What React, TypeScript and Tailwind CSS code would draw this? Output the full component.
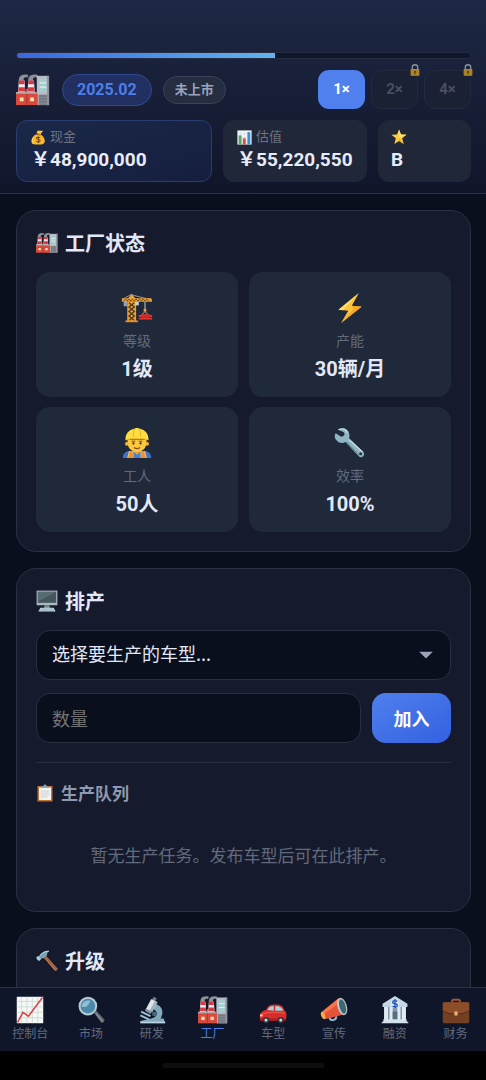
import type { ReactNode } from "react";
import clsx from "clsx";

type IconProps = { className?: string };

function Icon({ className, children }: { className?: string; children: ReactNode }) {
  return (
    <svg viewBox="0 0 36 36" className={clsx("shrink-0", className)} aria-hidden="true">
      {children}
    </svg>
  );
}

function FactoryIcon({ className }: IconProps) {
  return (
    <Icon className={className}>
      <path d="M3 6C4 2 8 1 13 2l-1 3C9 4 8 5 8 8H3z" fill="#8d9097" />
      <path d="M13 6c1-4 5-5 10-4l-1 3c-3-1-4 0-4 3h-5z" fill="#8d9097" />
      <path d="M22 3h13v31H22z" fill="#b9bcc3" />
      <path d="M33 3h2v31h-2z" fill="#8f929a" />
      <path d="M25 6h7v14h-7z" fill="#9fd0d2" />
      <path d="M25 10.500h7M25 15h7" stroke="#e3eeee" strokeWidth="1.300" />
      <path d="M3 8h6l1 14H2z" fill="#ececf0" />
      <path d="M13 8h6l1 14h-8z" fill="#ececf0" />
      <path d="M3 8h6v4H3zM2.500 15h7v4.500h-7zM13 8h6v4h-6zM12.500 15h7v4.500h-7z" fill="#d93a42" />
      <path d="M0 20l11 0v-3h1l0 3h10v3H0z" fill="#b5a7a8" />
      <path d="M0 22h23v12H0z" fill="#d84a40" />
      <path d="M11 22h1v12h-1z" fill="#a7352f" />
      <path d="M4 26h4v4H4zM15 26h4v4h-4z" fill="#fbe2a8" />
      <path d="M24 23h9v11h-9z" fill="#777a82" />
      <path d="M24 26h9M24 29h9M24 32h9" stroke="#8d9098" strokeWidth=".7" />
    </Icon>
  );
}

function MoneyBagIcon({ className }: IconProps) {
  return (
    <Icon className={className}>
      <path d="M15 9C5 13 0 22 1 29c1 6 7 6 15 6s16-1 17-7c1-7-5-15-12-19z" fill="#f6b92c" />
      <path d="M14 8c0-3 0-5 3-7 2 2 4 0 6 1s4-1 6 0c-1 3-4 4-6 8z" fill="#fbc93a" />
      <path d="M12 9l12 1-1 3-11-1z" fill="#a9691f" />
      <path d="M6 18c-3 4-3 10-1 12" stroke="#ffe07b" strokeWidth="2" fill="none" />
      <path d="M22 19c-3-3-9-2-9 1 0 4 9 2 9 6 0 4-7 4-10 1M17.500 15v16" stroke="#7a4a17" strokeWidth="2.500" fill="none" />
    </Icon>
  );
}

function BarChartIcon({ className }: IconProps) {
  return (
    <Icon className={className}>
      <path d="M1 1h34v34H1z" fill="#f3f6f8" />
      <path d="M1 9h34M1 18h34M1 27h34M9 1v34M18 1v34M27 1v34" stroke="#c5d3da" />
      <path d="M4 13h7v22H4z" fill="#5aa469" />
      <path d="M14 20h7v15h-7z" fill="#dd4a46" />
      <path d="M25 5h7v30h-7z" fill="#3b8fd6" />
    </Icon>
  );
}

function StarIcon({ className }: IconProps) {
  return (
    <Icon className={className}>
      <path d="M18 1l4.500 11.500L35 13l-9.800 8L28.500 34 18 27 7.500 34l3.300-13L1 13l12.500-.5z" fill="#fccb3f" />
      <path d="M18 1l4.500 11.500L35 13l-17 7z" fill="#ffe26e" />
      <path d="M28.500 34L18 27V20z" fill="#efa92b" />
    </Icon>
  );
}

function LockIcon({ className }: IconProps) {
  return (
    <Icon className={className}>
      <path d="M10 17V9c0-9 16-9 16 0v8" stroke="#8f949c" strokeWidth="4" fill="none" />
      <rect x="5" y="15" width="26" height="20" rx="2" fill="#b98d2b" />
      <path d="M5 20h26M5 25h26M5 30h26" stroke="#8d6a22" strokeWidth="1.500" />
      <path d="M18 20a3 3 0 011.500 5.500V31h-3v-5.500A3 3 0 0118 20z" fill="#483613" />
    </Icon>
  );
}

function CraneIcon({ className }: IconProps) {
  return (
    <Icon className={className}>
      <path d="M11 3L35 9M11 3L2 8" stroke="#9da2a8" strokeWidth="1" />
      <path d="M3 10h4v6H3z" fill="#9aa0a8" />
      <path d="M1 7h7l4-5 4 5h18l1 4H1z" fill="#eda036" />
      <path d="M3 10l2-2 2 2 2-2 2 2 2-2 2 2 2-2 2 2 2-2 2 2 2-2 2 2 2-2 2 2" stroke="#5b411f" strokeWidth="1.100" fill="none" />
      <path d="M7 11h10v22H7z" fill="#eda036" />
      <path d="M9 12l6 5-6 5 6 5-6 5M15 12l-6 5 6 5-6 5 6 5" stroke="#49371f" strokeWidth="1.500" fill="none" />
      <path d="M5 32h14v2H5z" fill="#e69228" />
      <path d="M16 11h4v4h-4z" fill="#c7d2d6" />
      <path d="M27 11v9" stroke="#a6abb1" strokeWidth="1.400" />
      <path d="M25.500 19h3v3h-3z" fill="#eda036" />
      <path d="M27 22l-4 4h8z" fill="none" stroke="#b8b8b8" />
      <path d="M20 26h15v2H20zM20 29h15v2H20z" fill="#e4372f" />
      <path d="M23 25h9v4h-9z" fill="#cf2b27" />
    </Icon>
  );
}

function BoltIcon({ className }: IconProps) {
  return (
    <Icon className={className}>
      <path d="M28 1L5 20l11 1L8 35l23-18.500-11-1z" fill="#fbc23c" />
      <path d="M28 1L5 20l5 .5z" fill="#ffdc6a" />
      <path d="M20 15.500l11 1L8 35l14-16z" fill="#f5a72c" />
    </Icon>
  );
}

function WorkerIcon({ className }: IconProps) {
  return (
    <Icon className={className}>
      <path d="M2 35c0-6 4-8 9-8h14c5 0 9 2 9 8z" fill="#3f71c9" />
      <path d="M9 27h18l2 8H7z" fill="#fbdc4a" />
      <path d="M8 35l2-8h3l1 8zM28 35l-2-8h-3l-1 8z" fill="#ef8f38" />
      <path d="M14 27l4 4 4-4v8h-8z" fill="#4c7fd6" />
      <path d="M14 23h8v4l-4 4-4-4z" fill="#eaa42c" />
      <path d="M6 14h24v5H6z" fill="#624018" />
      <circle cx="6.500" cy="19" r="2" fill="#f5b832" />
      <circle cx="29.500" cy="19" r="2" fill="#f5b832" />
      <path d="M7.500 14h21v4c0 6-5 10-10.500 10S7.500 24 7.500 18z" fill="#fbc840" />
      <path d="M12 16h4M20 16h4" stroke="#6b431a" />
      <circle cx="14" cy="18.500" r="1.300" fill="#49311c" />
      <circle cx="22" cy="18.500" r="1.300" fill="#49311c" />
      <path d="M14.500 23c2 1.500 5 1.500 7 0" stroke="#8b4c20" strokeWidth="1.300" fill="none" />
      <path d="M5 15c0-8 4-12 10-13 1-1 5-1 6 0 6 1 10 5 10 13-7-3-19-3-26 0z" fill="#ffdf3f" />
      <path d="M15 2c-1 3-1 6-1 9M21 2c1 3 1 6 1 9" stroke="#e4b52d" strokeWidth="1.200" fill="none" />
      <path d="M4 15c7-4 21-4 28 0-7-2-21-2-28 0z" fill="#f2bd2e" />
    </Icon>
  );
}

function WrenchIcon({ className }: IconProps) {
  return (
    <Icon className={className}>
      <path d="M5 3c5-3 11-1 12 4 1 3 0 4 0 6l16 15c3 3-2 8-5 5L13 17c-4 2-8 1-11-3-2-3-1-6 0-7l6 4c3 0 5-3 3-5z" fill="#8fb4c2" />
      <path d="M17 14l15 14M5 3c5-2 9-1 10 4" stroke="#c5dde5" strokeWidth="1.500" fill="none" />
      <path d="M14 17l14 15" stroke="#628b9b" strokeWidth="1.500" />
      <circle cx="30" cy="30" r="1.700" fill="#24343f" />
    </Icon>
  );
}

function MonitorIcon({ className }: IconProps) {
  return (
    <Icon className={className}>
      <path d="M1 1h34v24H1z" fill="#a7bac1" />
      <path d="M3 3h30v18H3z" fill="#45565e" />
      <path d="M3 3h30L3 19z" fill="#5a6c73" />
      <path d="M14 25h8l1 5H13z" fill="#76909b" />
      <path d="M7 29h22l3 6H4z" fill="#c0d8df" />
      <path d="M8 31h20M6 33h24" stroke="#83a6b1" />
    </Icon>
  );
}

function ClipboardIcon({ className }: IconProps) {
  return (
    <Icon className={className}>
      <path d="M3 4h30v31H3z" fill="#bd7439" />
      <path d="M6 7h24v25H6z" fill="#f4f4f3" />
      <path d="M9 14h18M9 18h18M9 22h18M9 26h14" stroke="#bdc5ca" strokeWidth="1.500" />
      <path d="M10 8c0-3 3-3 5-4 0-4 6-4 6 0 2 1 5 1 5 4z" fill="#8aa8b4" />
    </Icon>
  );
}

function HammerIcon({ className }: IconProps) {
  return (
    <Icon className={className}>
      <path d="M14 13l3-3 18 20c1 3-2 5-4 4z" fill="#a3633b" />
      <path d="M14 13l17 20" stroke="#cf8a5b" strokeWidth="1.500" />
      <path d="M1 12l5-3c5-6 10-9 16-7-3 1-4 3-4 7l-5 5-3-1-4 4z" fill="#78a3b5" />
      <path d="M6 9C11 4 16 2 21 2" stroke="#c1dce6" strokeWidth="1.500" fill="none" />
      <ellipse cx="4" cy="14" rx="2.700" ry="4" transform="rotate(-38 4 14)" fill="#abc9d7" />
    </Icon>
  );
}

function ChartUpIcon({ className }: IconProps) {
  return (
    <Icon className={className}>
      <path d="M1 1h34v34H1z" fill="#f7f8f6" />
      <path d="M1 7h34M1 14h34M1 21h34M1 28h34M7 1v34M14 1v34M21 1v34M28 1v34" stroke="#c3d7cd" />
      <path d="M2 34l7-13 7 5L34 2" stroke="#d6404a" strokeWidth="2" fill="none" />
    </Icon>
  );
}

function MagnifierIcon({ className }: IconProps) {
  return (
    <Icon className={className}>
      <path d="M22 22l3-3 10 11c1 3-2 5-4 4z" fill="#60646b" />
      <path d="M24 22l9 11" stroke="#92969c" strokeWidth="1.500" />
      <circle cx="14" cy="13" r="12" fill="#b7cbd4" />
      <circle cx="14" cy="13" r="9.500" fill="#4f89a9" />
      <path d="M6 14c0-6 5-9 11-8-2 6-5 9-11 8z" fill="#8ebfd6" />
    </Icon>
  );
}

function MicroscopeIcon({ className }: IconProps) {
  return (
    <Icon className={className}>
      <path d="M21 10c10 2 13 10 8 19h4l2 6H3v-3l14-3c9-2 9-9 3-12z" fill="#82aabd" />
      <path d="M20 1l4 2-2 4-4-2z" fill="#6f7d86" />
      <path d="M17 4l8 4-7 13-8-4z" fill="#dce4e8" />
      <path d="M22 6l3 2-7 13-3-2z" fill="#a2b2ba" />
      <path d="M10 16l8 4-2 3-7-4z" fill="#8097a3" />
      <path d="M4 20l12 6M3 25l11 5" stroke="#9cc0d0" strokeWidth="2.500" />
      <circle cx="21" cy="23" r="3" fill="#41687b" />
      <path d="M3 33h32v2H3z" fill="#b9d3df" />
    </Icon>
  );
}

function CarIcon({ className }: IconProps) {
  return (
    <Icon className={className}>
      <path d="M1 26c0-4 3-7 8-8 3-6 5-7 12-7 6 0 10 1 12 8 3 1 3 9 1 12H3c-2 0-2-3-2-5z" fill="#d92d2c" />
      <path d="M11 18c2-4 4-5 8-5v6zM21 13c5 0 8 1 10 6H21z" fill="#a7d1dc" />
      <path d="M2 25c5-4 16-5 31-3" stroke="#f05949" strokeWidth="1.500" fill="none" />
      <path d="M1 29h33v3H2z" fill="#a31f24" />
      <circle cx="9" cy="31" r="4" fill="#30343b" />
      <circle cx="28" cy="31" r="4" fill="#30343b" />
      <circle cx="9" cy="31" r="2" fill="#d0d2d5" />
      <circle cx="28" cy="31" r="2" fill="#d0d2d5" />
      <circle cx="3" cy="25" r="1.500" fill="#ffe1a1" />
    </Icon>
  );
}

function MegaphoneIcon({ className }: IconProps) {
  return (
    <Icon className={className}>
      <path d="M12 27c1 6 9 5 9-1" stroke="#9db6c1" strokeWidth="2.500" fill="none" />
      <path d="M3 20L24 3l9 20L6 30z" fill="#e6533a" />
      <path d="M3 20L24 3l2 5L4 24z" fill="#f5764c" />
      <ellipse cx="4" cy="25" rx="2.500" ry="5" transform="rotate(-20 4 25)" fill="#f4ae42" />
      <ellipse cx="28.500" cy="13.500" rx="6" ry="11.500" transform="rotate(-16 28.500 13.500)" fill="#b4cbd4" />
      <ellipse cx="29" cy="13.500" rx="4" ry="9.500" transform="rotate(-16 29 13.500)" fill="#3d6870" />
    </Icon>
  );
}

function BankIcon({ className }: IconProps) {
  return (
    <Icon className={className}>
      <path d="M18 0l16 10v4H2v-4z" fill="#c5d6e4" />
      <path d="M4 14h28v17H4z" fill="#8498a8" />
      <path d="M4 14h5v17H4zM11 14h4v17h-4zM21 14h4v17h-4zM27 14h5v17h-5z" fill="#e0ebf3" />
      <path d="M15 20h6v12h-6z" fill="#57707e" />
      <path d="M3 30h30v3H3zM1 33h34v2H1z" fill="#d6e2eb" />
      <circle cx="18" cy="10" r="6" fill="#d8e6f2" />
      <path d="M21 7c-3-2-6-1-6 1 0 3 6 1 6 4 0 3-4 3-6 1M18 4v12" stroke="#2458bf" strokeWidth="1.800" fill="none" />
    </Icon>
  );
}

function BriefcaseIcon({ className }: IconProps) {
  return (
    <Icon className={className}>
      <path d="M13 9V6c0-2 10-2 10 0v3" stroke="#9a572f" strokeWidth="2.500" fill="none" />
      <rect x="1" y="8" width="34" height="27" rx="2" fill="#754022" />
      <path d="M1 10c0-1 1-2 2-2h30c1 0 2 1 2 2v9c-10 6-24 6-34 0z" fill="#8c4d2b" />
      <path d="M1 19c10 6 24 6 34 0" stroke="#4f2b18" strokeWidth="1.200" fill="none" />
      <path d="M16 20h4v5h-4z" fill="#ebbd74" />
    </Icon>
  );
}

const speeds = [
  { label: "1×", locked: false },
  { label: "2×", locked: true },
  { label: "4×", locked: true },
];

const stats = [
  { icon: CraneIcon, label: "等级", value: "1级" },
  { icon: BoltIcon, label: "产能", value: "30辆/月" },
  { icon: WorkerIcon, label: "工人", value: "50人" },
  { icon: WrenchIcon, label: "效率", value: "100%" },
];

const tabs = [
  { icon: ChartUpIcon, label: "控制台" },
  { icon: MagnifierIcon, label: "市场" },
  { icon: MicroscopeIcon, label: "研发" },
  { icon: FactoryIcon, label: "工厂", active: true },
  { icon: CarIcon, label: "车型" },
  { icon: MegaphoneIcon, label: "宣传" },
  { icon: BankIcon, label: "融资" },
  { icon: BriefcaseIcon, label: "财务" },
];

function Header() {
  return (
    <header className="flex shrink-0 flex-col gap-[11px] border-b border-[#2b3147] bg-linear-to-b from-[#1e2844] to-[#10152a] pt-[52px] pr-[15px] pb-[11px] pl-4 font-[Roboto,'Noto_Sans_CJK_SC',sans-serif]">
      <div className="h-[7px] overflow-hidden rounded-full border border-[#262d41] bg-[#0f1629]">
        <div className="h-full w-[57%] bg-linear-to-r from-[#3b66e0] to-[#63b3ed]" />
      </div>

      <div className="flex items-center justify-between">
        <div className="flex items-center">
          <FactoryIcon className="size-[34px]" />
          <span className="ml-3 flex h-8 items-center rounded-full border border-[#2f4a8c] bg-[#213060] px-3.5 text-base font-bold text-[#4d7fe9]">
            2025.02
          </span>
          <span className="ml-[11px] flex h-7 items-center rounded-full border border-[#3a4257] bg-[#252d40] px-[11px] text-[13px] font-bold text-[#9ba3b8]">
            未上市
          </span>
        </div>
        <div className="flex gap-1.5">
          {speeds.map((s) => (
            <button
              key={s.label}
              disabled={s.locked}
              className={clsx(
                "relative h-[39px] w-[47px] rounded-[11px] text-[15px] font-bold",
                s.locked
                  ? "border border-[#242a3c] bg-[#1a2134] text-[#484f60]"
                  : "bg-[#4f80ee] text-white"
              )}
            >
              {s.label}
              {s.locked && <LockIcon className="absolute -top-[7px] -right-1 size-3" />}
            </button>
          ))}
        </div>
      </div>

      <div className="grid grid-cols-[196fr_144fr_93fr] gap-[11px]">
        <div className="rounded-[11px] border border-[#2a3d70] bg-linear-to-br from-[#1b2848] to-[#151e3e] px-3.5 py-[7px]">
          <p className="flex items-center gap-1 text-[13px] leading-[18px] text-[#6b7280]">
            <MoneyBagIcon className="size-[15px]" />
            现金
          </p>
          <p className="text-[19px] leading-7 font-bold text-[#e8ecf8]">{"\uFFE5"}48,900,000</p>
        </div>
        <div className="rounded-[11px] border border-[#1f2738] bg-[#1f2738] px-[13px] py-[7px]">
          <p className="flex items-center gap-1 text-[13px] leading-[18px] text-[#6b7280]">
            <BarChartIcon className="size-[15px]" />
            估值
          </p>
          <p className="text-[19px] leading-7 font-bold whitespace-nowrap text-[#e8ecf8]">{"\uFFE5"}55,220,550</p>
        </div>
        <div className="rounded-[11px] border border-[#1f2738] bg-[#1f2738] px-3 py-[7px]">
          <p className="flex h-[18px] items-center">
            <StarIcon className="size-4" />
          </p>
          <p className="text-[19px] leading-7 font-bold text-[#e8ecf8]">B</p>
        </div>
      </div>
    </header>
  );
}

function Card({ icon, title, children }: { icon: ReactNode; title: string; children?: ReactNode }) {
  return (
    <section className="rounded-[20px] border border-[#2b3043] bg-[#151a2d] p-[19px]">
      <h2 className="mb-4 flex items-center gap-[7px] text-xl leading-[26px] font-bold text-[#e2e8f8]">
        {icon}
        {title}
      </h2>
      {children}
    </section>
  );
}

export default function App() {
  return (
    <div className="flex h-screen flex-col bg-[#0a0f1d] font-['Noto_Sans_CJK_SC',sans-serif]">
      <Header />

      <main className="flex min-h-0 flex-1 flex-col gap-4 overflow-y-auto pt-4 pr-[15px] pl-4 [scrollbar-width:none] *:shrink-0">
        {/* Factory status */}
        <Card icon={<FactoryIcon className="size-[22px]" />} title="工厂状态">
          <div className="grid grid-cols-2 gap-x-[11px] gap-y-2.5">
            {stats.map(({ icon: StatIcon, label, value }) => (
              <div key={label} className="flex flex-col items-center rounded-[14px] bg-[#202939] pt-5 pb-3.5">
                <StatIcon className="size-8" />
                <p className="mt-1.5 text-sm leading-5 text-[#626a7c]">{label}</p>
                <p className="mt-[5px] font-[Roboto,'Noto_Sans_CJK_SC',sans-serif] text-xl leading-7 font-bold text-[#e2e8f8]">
                  {value}
                </p>
              </div>
            ))}
          </div>
        </Card>

        {/* Production planning */}
        <Card icon={<MonitorIcon className="size-[22px]" />} title="排产">
          <div className="relative">
            <select
              aria-label="车型"
              className="h-[50px] w-full appearance-none rounded-[14px] border border-[#292e40] bg-[#0a0f1d] px-[15px] pb-1 text-lg text-[#e2e8f8]"
            >
              <option>选择要生产的车型...</option>
            </select>
            <svg
              viewBox="0 0 14 7"
              className="pointer-events-none absolute top-1/2 right-[18px] h-[7px] w-3.5 -translate-y-1/2"
              aria-hidden="true"
            >
              <path d="M0 0h14L7 7z" fill="#9ba3b8" />
            </svg>
          </div>
          <div className="mt-[13px] flex gap-[11px]">
            <input
              aria-label="数量"
              placeholder="数量"
              className="h-[50px] min-w-0 flex-1 rounded-[14px] border border-[#292e40] bg-[#0a0f1d] px-[15px] text-lg text-[#e2e8f8] placeholder:text-[#757575]"
            />
            <button className="h-[50px] w-[79px] rounded-[14px] bg-linear-to-br from-[#4f80ee] to-[#3460df] text-lg font-bold text-white">
              加入
            </button>
          </div>
          <div className="mt-[19px] border-t border-[#292e40] pt-[18px]">
            <h3 className="flex items-center gap-[7px] text-[17px] leading-6 font-bold text-[#9099af]">
              <ClipboardIcon className="size-[18px]" />
              生产队列
            </h3>
            <p className="pt-[37px] pb-6 text-center text-[17px] leading-[26px] text-[#626a7c]">
              暂无生产任务。发布车型后可在此排产。
            </p>
          </div>
        </Card>

        {/* Upgrade */}
        <Card icon={<HammerIcon className="size-[22px]" />} title="升级" />
      </main>

      {/* Bottom tabs */}
      <nav className="grid shrink-0 grid-cols-8 border-t border-[#2b3147] bg-[#10162a] pt-2 pb-[9px]">
        {tabs.map(({ icon: TabIcon, label, active }) => (
          <button key={label} className="flex flex-col items-center">
            <TabIcon className={active ? "size-[30px] -my-px" : "size-7"} />
            <span className={clsx("text-xs leading-[18px]", active ? "text-[#4d7fe9]" : "text-[#626a7c]")}>
              {label}
            </span>
          </button>
        ))}
      </nav>
      <div className="flex h-[29px] shrink-0 items-center justify-center bg-black">
        <div className="h-[5px] w-1/3 rounded-full bg-[#0e0e0e]" />
      </div>
    </div>
  );
}
